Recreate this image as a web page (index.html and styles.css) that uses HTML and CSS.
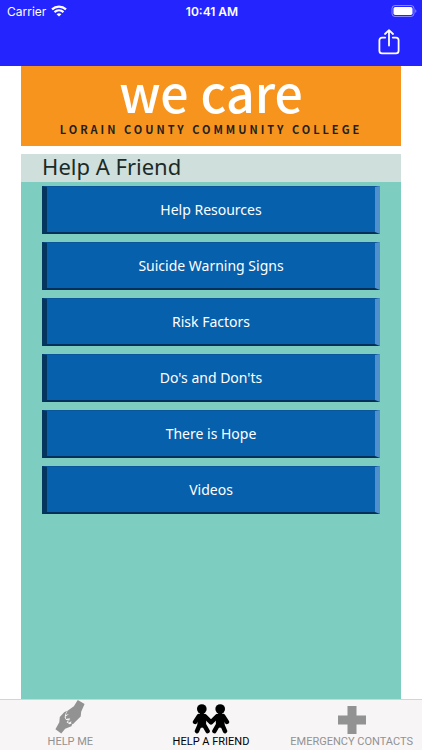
FILE: index.html
```html
<!DOCTYPE html>
<html lang="en">
<head>
    <meta charset="UTF-8">
    <meta name="viewport" content="width=device-width, initial-scale=1.0">
    <title>We Care - Help A Friend</title>
    <link rel="stylesheet" href="styles.css">
</head>
<body>

<header class="top-bar">
    <div class="status-bar">
        <div class="carrier">
            <span>Carrier</span>
            <svg width="16" height="12" viewBox="0 0 16 12" fill="none" stroke="#fff" stroke-width="2.2">
                <path d="M1 4.4C5 .6 11 .6 15 4.4"/>
                <path d="M3.5 7.1c2.6-2.4 6.4-2.4 9 0"/>
                <path d="M8 11.6 5.6 9.2c1.4-1.2 3.4-1.2 4.8 0z" fill="#fff" stroke="none"/>
            </svg>
        </div>
        <div class="time">10:41 AM</div>
        <div class="battery">
            <svg width="26" height="12" viewBox="0 0 26 12">
                <rect x="1" y=".5" width="22" height="11" rx="3" fill="none" stroke="#fff" stroke-opacity=".45"/>
                <rect x="2.5" y="2" width="19" height="8" rx="1.8" fill="#fff"/>
                <path d="M24.3 4.2c1.4.5 1.4 3.1 0 3.6z" fill="#fff" fill-opacity=".5"/>
            </svg>
        </div>
    </div>
    <div class="nav-bar">
        <button class="share" type="button" aria-label="Share">
            <svg width="22" height="26" viewBox="0 0 22 26" fill="none" stroke="#fff" stroke-width="1.8" stroke-linecap="round" stroke-linejoin="round">
                <path d="M7.2 8.6H4a2.6 2.6 0 0 0-2.6 2.6v10.6A2.6 2.6 0 0 0 4 24.4h14a2.6 2.6 0 0 0 2.6-2.6V11.2A2.6 2.6 0 0 0 18 8.6h-3.2"/>
                <path d="M11 16.6V1.4M7 5l4-3.8L15 5"/>
            </svg>
        </button>
    </div>
</header>

<main class="page">
    <div class="banner">
        <div class="logo"><span>we</span> <span>care</span></div>
        <div class="college">LORAIN COUNTY COMMUNITY COLLEGE</div>
    </div>

    <section class="content">
        <h1>Help A Friend</h1>
        <div class="menu">
            <button type="button">Help Resources</button>
            <button type="button">Suicide Warning Signs</button>
            <button type="button">Risk Factors</button>
            <button type="button">Do's and Don'ts</button>
            <button type="button">There is Hope</button>
            <button type="button">Videos</button>
        </div>
    </section>
</main>

<nav class="tab-bar">
    <a class="tab" href="#help-me">
        <svg width="32" height="34" viewBox="0 1 32 35" fill="#929292">
            <path d="M24 1 31 5 27.500 13 27 18 22 23 19 26 17 25 17.500 23 14.500 24.500 13.500 23 16 20 12 20.500 11.500 18 15 15.500 11.500 16.500 13.500 12 20 7.500z"/>
            <path d="M7 35.500 1 31 5 24 5.500 18.500 10 13.500 13 12 11 16 10.500 19 12 21.500 14 21.500 12.500 24 15.500 26 18.500 25 17.500 28 11 30.500z"/>
            <path d="m13 20.500 3 0-2 3" fill="none" stroke="#f7f5f6" stroke-width=".5"/>
        </svg>
        <span>HELP ME</span>
    </a>
    <a class="tab active" href="#help-a-friend">
        <svg width="38" height="30" viewBox="0 0 38 31" fill="#000">
            <circle cx="9.500" cy="5.200" r="5"/>
            <circle cx="28.500" cy="5.200" r="5"/>
            <path d="M7.500 8h4v4h-4zM26.500 8h4v4h-4z"/>
            <path d="M9.500 14v6M28.500 14v6" stroke="#000" stroke-width="9" stroke-linecap="round"/>
            <path d="M6.500 12.500 2.500 18.500M12.500 12.500 19 19 25.500 12.500M31.500 12.500 35.500 18.500M7.500 21 4.500 28M11.500 21l4 7M26.500 21l-4 7M30.500 21l3 7" fill="none" stroke="#000" stroke-width="4.600" stroke-linecap="round" stroke-linejoin="round"/>
        </svg>
        <span>HELP A FRIEND</span>
    </a>
    <a class="tab" href="#emergency-contacts">
        <svg width="28" height="28" viewBox="0 0 28 28" fill="#929292">
            <path d="M9.500 0h9v9.500H28v9h-9.500V28h-9v-9.500H0v-9h9.500z"/>
        </svg>
        <span>EMERGENCY CONTACTS</span>
    </a>
</nav>

</body>
</html>
```
FILE: styles.css
```css
* {
    box-sizing: border-box;
}

body {
    margin: 0;
    min-height: 100vh;
    display: flex;
    flex-direction: column;
    background: #fff;
    font-family: "Noto Sans", sans-serif;
}

button {
    font-family: inherit;
    cursor: pointer;
}

svg {
    display: block;
}

/* Status and navigation bars */
.top-bar {
    background: #2424ff;
    color: #fff;
    font-family: Inter, sans-serif;
}

.status-bar {
    display: grid;
    grid-template-columns: 1fr auto 1fr;
    align-items: center;
    height: 22px;
    padding: 0 5px 0 7px;
    font-size: 12px;
}

.carrier {
    display: flex;
    align-items: center;
    gap: 5px;
}

.time {
    font-weight: 600;
}

.battery {
    justify-self: end;
}

.nav-bar {
    display: flex;
    justify-content: flex-end;
    align-items: center;
    height: 44px;
    padding: 0 22px 4px;
}

.share {
    padding: 0;
    border: none;
    background: none;
}

/* Page content */
.page {
    flex: 1;
    display: flex;
    flex-direction: column;
    gap: 8px;
    margin: 0 5%;
}

.banner {
    display: flex;
    flex-direction: column;
    gap: 6px;
    height: 80px;
    background: #f7941e;
    font-family: "Noto Sans CJK JP", sans-serif;
    text-align: center;
}

.logo {
    display: flex;
    justify-content: center;
    gap: 12px;
    color: #fff;
    font-size: 50px;
    font-weight: 500;
    line-height: 50px;
}

.college {
    color: #231f20;
    font-size: 11px;
    font-weight: 700;
    line-height: 14px;
    letter-spacing: 3px;
    white-space: nowrap;
}

.content {
    flex: 1;
    background: #7dcdc0;
}

h1 {
    margin: 0;
    padding: 0 21px 4px;
    background: #cfdfdc;
    color: #1b2b28;
    font-size: 22px;
    font-weight: 400;
    line-height: 24px;
}

.menu {
    display: flex;
    flex-direction: column;
    gap: 8px;
    padding: 4px 21px;
}

.menu button {
    height: 48px;
    border-style: solid;
    border-width: 1px 5px 2px;
    border-color: #0b559b #5090cc #04305a #04365f;
    background: #0660ac;
    color: #fff;
    font-size: 14px;
}

/* Bottom tabs */
.tab-bar {
    display: grid;
    grid-template-columns: repeat(3, 1fr);
    height: 51px;
    padding-bottom: 1px;
    border-top: 1px solid #d5d3d4;
    background: #f7f5f6;
    font-family: Roboto, sans-serif;
}

.tab {
    display: flex;
    flex-direction: column;
    align-items: center;
    justify-content: flex-end;
    gap: 1px;
    color: #929292;
    font-size: 11px;
    line-height: 14px;
    text-decoration: none;
    white-space: nowrap;
}

.tab.active {
    color: #000;
}
```
